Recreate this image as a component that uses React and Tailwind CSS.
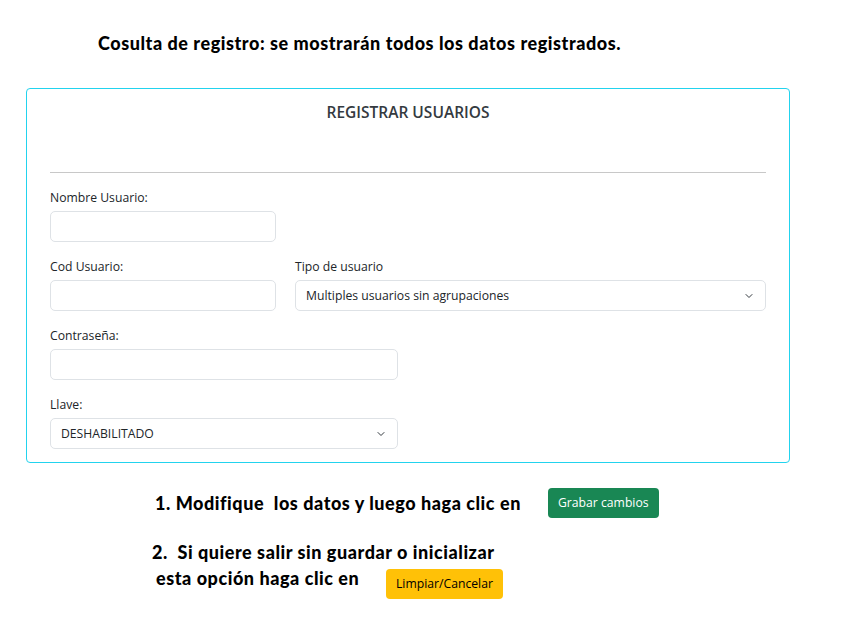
import React, { useState } from "react";
import { FiChevronDown } from "react-icons/fi";

const heading = "font-['Lato',_sans-serif] font-black text-black text-[18px] leading-[26px] tracking-[0.55px]";
const formFont = "font-['Open_Sans',_'Noto_Sans',_sans-serif]";

function Field({ label, className = "", children }) {
  return (
    <div className={`flex flex-col ${className}`}>
      <label className="text-[12.2px] text-[#212529] leading-[18px] mb-[4px]">{label}</label>
      {children}
    </div>
  );
}

function TextBox({ width, type = "text" }) {
  return (
    <input
      type={type}
      className={`${width} h-[31px] rounded-[5px] border border-[#dee2e6] bg-white px-3 text-[13px] outline-none`}
    />
  );
}

function SelectBox({ width, value, options, onChange }) {
  return (
    <div className={`relative ${width}`}>
      <select
        value={value}
        onChange={(e) => onChange(e.target.value)}
        className="w-full h-[31px] appearance-none rounded-[5px] border border-[#dee2e6] bg-white pl-[10px] pr-8 pt-[2px] text-[12.2px] text-[#212529] outline-none"
      >
        {options.map((o) => (
          <option key={o}>{o}</option>
        ))}
      </select>
      <FiChevronDown className="pointer-events-none absolute right-[11px] top-[10px] text-[#343a40]" size={12} />
    </div>
  );
}

export default function App() {
  const [tipo, setTipo] = useState("Multiples usuarios sin agrupaciones");
  const [llave, setLlave] = useState("DESHABILITADO");

  return (
    <div className="bg-white min-h-[637px] w-[852px] pt-[30px]">
      <h1 className={`${heading} pl-[98px]`}>
        Cosulta de registro: se mostrarán todos los datos registrados.
      </h1>

      <div className={`${formFont} mt-[32px] ml-[26px] w-[764px] h-[375px] rounded-[4px] border border-[#22d3ee] px-[23px] pt-[12px]`}>
        <h2 className="text-center text-[15.5px] font-semibold text-[#343a40] leading-[22px]">REGISTRAR USUARIOS</h2>
        <hr className="mt-[49px] border-[#c8c8c8]" />

        <Field label="Nombre Usuario:" className="mt-[16px]">
          <TextBox width="w-[226px]" />
        </Field>

        <div className="flex gap-[19px] mt-[16px]">
          <Field label="Cod Usuario:">
            <TextBox width="w-[226px]" />
          </Field>
          <Field label="Tipo de usuario" className="flex-1">
            <SelectBox
              width="w-full"
              value={tipo}
              onChange={setTipo}
              options={["Multiples usuarios sin agrupaciones", "Usuario único", "Usuarios agrupados"]}
            />
          </Field>
        </div>

        <Field label="Contraseña:" className="mt-[16px]">
          <TextBox width="w-[348px]" type="password" />
        </Field>

        <Field label="Llave:" className="mt-[16px]">
          <SelectBox width="w-[348px]" value={llave} onChange={setLlave} options={["DESHABILITADO", "HABILITADO"]} />
        </Field>
      </div>

      <div className="flex items-center mt-[25px] pl-[155px]">
        <p className={`${heading} w-[393px]`}>1. Modifique&nbsp; los datos y luego haga clic en</p>
        <button className={`${formFont} h-[30px] px-[10px] rounded-[4px] bg-[#198754] text-white text-[12.2px]`}>
          Grabar cambios
        </button>
      </div>

      <div className="mt-[21px] pl-[152px]">
        <p className={heading}>2.&nbsp; Si quiere salir sin guardar o inicializar</p>
        <div className="flex items-start">
          <p className={`${heading} pl-[4px] w-[234px]`}>esta opción haga clic en</p>
          <button className={`${formFont} mt-[4px] h-[30px] px-[10px] rounded-[4px] bg-[#ffc107] text-black text-[12.2px]`}>
            Limpiar/Cancelar
          </button>
        </div>
      </div>
    </div>
  );
}
